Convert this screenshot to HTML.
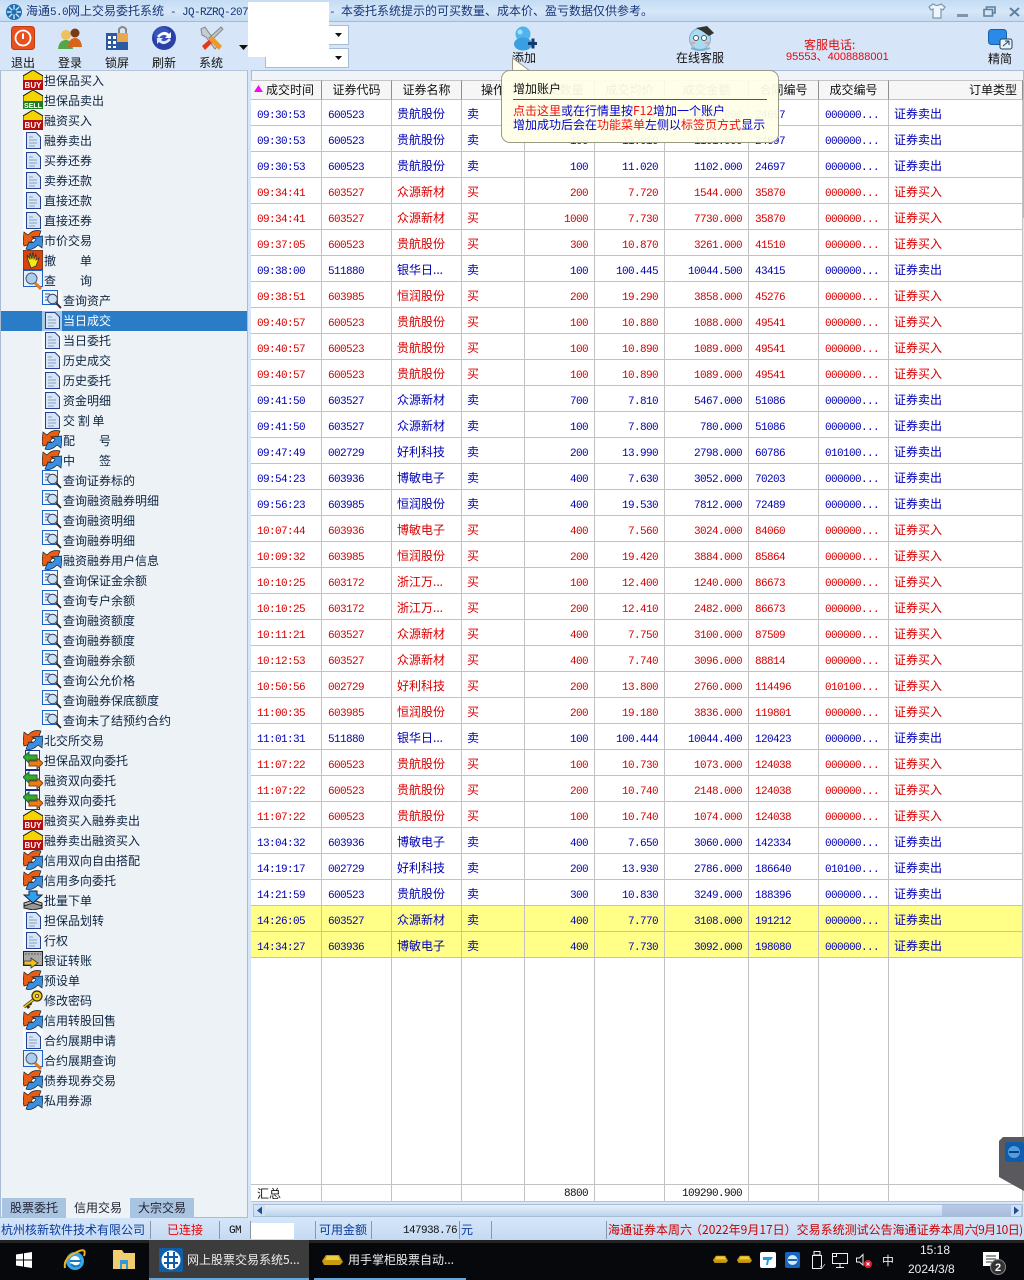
<!DOCTYPE html>
<html lang="zh"><head><meta charset="utf-8"><title>海通5.0网上交易委托系统</title>
<style>
*{box-sizing:border-box}
html,body{margin:0;padding:0}
body{width:1024px;height:1280px;position:relative;overflow:hidden;background:#d6e6f8;font:12px/14px "WenQuanYi Zen Hei","Noto Sans CJK SC",sans-serif;color:#111}
.a{position:absolute;white-space:nowrap}
.m{font-family:"Liberation Mono","WenQuanYi Zen Hei",monospace;font-size:11px;letter-spacing:-.6px}
svg{position:absolute;overflow:visible}
#title{left:0;top:0;width:1024px;height:22px;background:linear-gradient(#c4dcf4,#d6e7f8 55%,#c4dbf3);border-bottom:1px solid #a9b9cc}
#side{left:0;top:70px;width:248px;height:1148px;background:#edf2f7;border:1px solid #a9bcd6;border-top:1px solid #b5c5da}
.t{position:absolute;height:20px;line-height:20px;white-space:nowrap;color:#0d2440}
.t svg{left:0;top:0;width:20px;height:20px}
.t b{font-weight:normal;position:absolute;left:21px;top:1px}
.s{left:42px}.p{left:23px}
#sel{left:1px;top:311px;width:246px;height:20px;background:#2b7cc6}
table{border-collapse:separate;border-spacing:0;table-layout:fixed;position:absolute;left:251px;top:80px;width:772px;background:#fff}
td,th{padding:3px 6px 0 5px;border-right:1px solid #c2c2c2;border-bottom:1px solid #c2c2c2;overflow:hidden;white-space:nowrap;font-weight:normal;height:26px;line-height:14px;text-align:left}
th{height:20px;padding:0 6px;background:#f6f6f6;border-right:1px solid #8e8e8e;border-bottom:1px solid #c2c2c2;border-top:1px solid #c4c4c4;text-align:center;color:#111}
td:nth-child(1),td:nth-child(2),td:nth-child(5),td:nth-child(6),td:nth-child(7),td:nth-child(8),td:nth-child(9){font:11px/14px "Liberation Mono",monospace;letter-spacing:-.6px;padding-left:6px;padding-top:6px}
td:nth-child(5),td:nth-child(6),td:nth-child(7){text-align:right}
tr.b td{color:#0000b4}tr.r td{color:#d80000}tr.y td{background:#ffff88}
tr.sum td,tr.sum td:nth-child(n){height:17px;padding-top:3px;line-height:13px;color:#111}
#tip{left:501px;top:70px;width:278px;height:73px;background:rgba(255,255,232,.94);border:1px solid #9a9a88;border-radius:9px}
#status{left:0;top:1218px;width:1024px;height:22px;background:linear-gradient(#d5e6f9,#c4daf3)}
.sep{position:absolute;top:1221px;width:1px;height:18px;background:#8a98aa}
#task{left:0;top:1240px;width:1024px;height:40px;background:#07080c}
.tab{position:absolute;top:1198px;height:20px;line-height:19px;text-align:center;width:64px;background:#a9c4e0;color:#223}
</style></head><body>
<svg width="0" height="0" style="position:absolute">
<defs>
<symbol id="buy" viewBox="0 0 20 20"><path d="M10 0 L20 6 V12 H0 V6Z" fill="#f5d400" stroke="#111"/><rect x="0" y="10" width="20" height="10" fill="#b50e0e"/><text x="10" y="18" font-family="Liberation Sans" font-weight="bold" font-size="8" fill="#fff" text-anchor="middle">BUY</text></symbol>
<symbol id="sell" viewBox="0 0 20 20"><path d="M10 0 L20 6 V12 H0 V6Z" fill="#f5d400" stroke="#111"/><rect x="0" y="11" width="20" height="8" fill="#1f7a1f"/><text x="10" y="18" font-family="Liberation Sans" font-weight="bold" font-size="7" fill="#fff" text-anchor="middle">SELL</text></symbol>
<symbol id="doc" viewBox="0 0 20 20"><rect x="0" y="0" width="20" height="20" fill="#fff" opacity=".6"/><path d="M3.500 2.500H13L17.500 7V18.500H3.500Z" fill="#d6e6f8" stroke="#243f8f"/><path d="M6 7h4M6 10h8M6 13h8M6 16h6" stroke="#8aa0b8"/></symbol>
<symbol id="swirl" viewBox="0 0 20 20"><rect width="20" height="20" fill="#fff" opacity=".5"/><path d="M0 12L1 2L5 5Q10 -1 18 1L15 9Q10 7 8 11L11 13L1 16Z" fill="#ea5c12" stroke="#222" stroke-width=".7"/><path d="M20 6L19 18L15 15Q9 21 3 19L6 12Q11 14 13 9L9 7Z" fill="#3b8fe0" stroke="#123" stroke-width=".7"/></symbol>
<symbol id="hand" viewBox="0 0 20 20"><rect width="20" height="20" fill="#d8440c" stroke="#333"/><path d="M5 10L4 5L7 9L7 3L9 9L10 2L11 9L13 4L13 10L16 8L13 16L8 18Z" fill="#f4ea10" stroke="#333" stroke-width=".8"/></symbol>
<symbol id="search" viewBox="0 0 20 20"><rect x=".5" y=".5" width="19" height="16" fill="#e6eef8" stroke="#1c60c8"/><circle cx="8.500" cy="8.500" r="5.500" fill="#a8d0ee" stroke="#557"/><path d="M12 13L18 19" stroke="#ea7810" stroke-width="3"/></symbol>
<symbol id="q" viewBox="0 0 20 20"><rect width="20" height="20" fill="#fff" opacity=".7"/><rect x=".5" y=".5" width="15" height="14" fill="#eef5fc" stroke="#1c60c8"/><path d="M3 4h5M3 7h4M3 10h4" stroke="#1c60c8"/><circle cx="10.500" cy="9" r="4.800" fill="#c8e2f4" stroke="#445"/><path d="M14 13L19 18" stroke="#333" stroke-width="2"/></symbol>
<symbol id="arrows" viewBox="0 0 20 20"><path d="M2.500 .500H16.500V19.500H2.500Z" fill="#fff" stroke="#1c2f8f"/><path d="M0 7L6 2V5H14V10H6V13Z" fill="#36a82c" stroke="#164"/><path d="M20 13L14 8V11H6V16H14V19Z" fill="#ea7c14" stroke="#742"/></symbol>
<symbol id="batch" viewBox="0 0 20 20"><path d="M1 13L10 10L19 13V15L10 19L1 15Z" fill="#bbb" stroke="#222"/><path d="M1 16L10 13L19 16V18L10 20L1 18Z" fill="#999" stroke="#222"/><path d="M6 1H14V5H19L10 13L1 5H6Z" fill="#2fa0ee" stroke="#124"/></symbol>
<symbol id="card" viewBox="0 0 20 20"><rect x=".5" y="1.500" width="19" height="14" fill="#aaa" stroke="#222"/><path d="M2 4h16" stroke="#555" stroke-dasharray="2 1"/><path d="M1 11H8V8L15 13L8 18V15H1Z" fill="#f0c01a" stroke="#333" stroke-width=".8"/></symbol>
<symbol id="key" viewBox="0 0 20 20"><circle cx="14" cy="6" r="5" fill="#f2c81a" stroke="#3a2c00" stroke-width="1.200"/><circle cx="14" cy="6" r="1.500" fill="#edf2f7" stroke="#3a2c00" stroke-width=".8"/><path d="M10 10L1 17M3 14L6 18M6 12L8 15" stroke="#3a2c00" stroke-width="3"/><path d="M10 10L1 17" stroke="#f2c81a" stroke-width="1.500"/></symbol>
</defs></svg>

<div class="a" id="title"></div>
<svg style="left:5px;top:3px" width="18" height="18" viewBox="0 0 18 18"><circle cx="9" cy="9" r="8" fill="#1d6fb4"/><path d="M9 2V16M2 9H16M4 4L14 14M14 4L4 14" stroke="#cfe4f6" stroke-width="1.400"/><circle cx="9" cy="9" r="2.500" fill="#1d6fb4"/></svg>
<div class="a" style="left:26px;top:4px;color:#16347a;font-size:12px">海通<span class="m">5.0</span>网上交易委托系统<span class="m"> - JQ-RZRQ-207</span></div>
<div class="a" style="left:329px;top:4px;color:#16347a"><span class="m">- </span>本委托系统提示的可买数量、成本价、盈亏数据仅供参考。</div>
<svg style="left:928px;top:3px" width="18" height="16" viewBox="0 0 18 16"><path d="M5 1L1 4L3 7L5 6V15H13V6L15 7L17 4L13 1Q9 4 5 1Z" fill="#eef5fb" stroke="#7d97ad" stroke-width="1.200"/></svg>
<div class="a" style="left:957px;top:14px;width:11px;height:3px;background:#7d97ad"></div>
<svg style="left:983px;top:6px" width="13" height="11" viewBox="0 0 13 11"><path d="M3.500 3V1H12V7H9.500M1 3.500H9.500V10H1Z" fill="none" stroke="#5f7f9c" stroke-width="1.600"/></svg>
<svg style="left:1009px;top:7px" width="11" height="10" viewBox="0 0 11 10"><path d="M1 1L10 9M10 1L1 9" stroke="#5f7f9c" stroke-width="2"/></svg>

<!-- toolbar -->
<svg style="left:11px;top:26px" width="24" height="24" viewBox="0 0 24 24"><rect x=".5" y=".5" width="23" height="23" rx="3" fill="#e8501e" stroke="#c43a10"/><circle cx="12" cy="12" r="7.500" fill="none" stroke="#fff" stroke-width="1.800"/><path d="M12 7.500V13" stroke="#fff" stroke-width="2"/></svg>
<svg style="left:58px;top:27px" width="24" height="24" viewBox="0 0 24 24"><circle cx="8" cy="8" r="5" fill="#eec060"/><path d="M0 22Q1 13 8 13Q14 13 15 22Z" fill="#52a848"/><circle cx="17" cy="6" r="4.500" fill="#7a3a18"/><path d="M10 20Q11 11 17 11Q23 11 24 20Z" fill="#d8641c"/></svg>
<svg style="left:105px;top:26px" width="24" height="24" viewBox="0 0 24 24"><rect x="1" y="7" width="22" height="17" fill="#2b5aa0"/><path d="M3 10h3v3H3zM8 10h3v3H8zM3 15h3v3H3zM8 15h3v3H8zM3 20h3v2H3zM8 20h3v2H8z" fill="#fff"/><rect x="12" y="7" width="11" height="9" fill="#eaa648"/><path d="M14 7V3Q17.500 -1 21 3V7" fill="none" stroke="#888" stroke-width="2"/></svg>
<svg style="left:152px;top:26px" width="24" height="24" viewBox="0 0 24 24"><circle cx="12" cy="12" r="12" fill="#2a3fa8"/><circle cx="10" cy="9" r="8" fill="#3f63cc" opacity=".6"/><path d="M5 10Q12 3 17 8L19 6V12H13L15 10Q11 7 7 12Z" fill="#fff"/><path d="M19 14Q12 21 7 16L5 18V12H11L9 14Q13 17 17 12Z" fill="#dfe8ff"/></svg>
<svg style="left:199px;top:26px" width="24" height="24" viewBox="0 0 24 24"><path d="M2 3L6 1L10 7L20 18L16 23L7 11L3 9Z" fill="#c6ccd4" stroke="#888"/><path d="M22 1L24 3L13 14L10 12Z" fill="#c0c6cc" stroke="#888"/><path d="M11 13L3 20L6 24L14 16Z" fill="#e23a1c"/><path d="M13 10L23 20L20 24L10 14Z" fill="#ee9a2a"/></svg>
<svg style="left:239px;top:45px" width="9" height="5"><path d="M0 0H9L4.500 5Z" fill="#111"/></svg>
<div class="a" style="left:11px;top:56px">退出</div><div class="a" style="left:58px;top:56px">登录</div><div class="a" style="left:105px;top:56px">锁屏</div><div class="a" style="left:152px;top:56px">刷新</div><div class="a" style="left:199px;top:56px">系统</div>

<div class="a" style="left:265px;top:25px;width:84px;height:20px;background:#fff;border:1px solid #a9bcd6"></div>
<div class="a" style="left:265px;top:48px;width:84px;height:20px;background:#fff;border:1px solid #a9bcd6"></div>
<svg style="left:334px;top:33px" width="9" height="5"><path d="M1 0H8L4.500 4Z" fill="#111"/></svg>
<svg style="left:334px;top:56px" width="9" height="5"><path d="M1 0H8L4.500 4Z" fill="#111"/></svg>
<div class="a" style="left:248px;top:2px;width:81px;height:55px;background:#fff"></div>

<svg style="left:513px;top:26px" width="24" height="25" viewBox="0 0 24 25"><circle cx="10" cy="8" r="7.500" fill="#4eb4ee"/><ellipse cx="10" cy="18" rx="9" ry="6.500" fill="#3a9ee2"/><circle cx="7" cy="6" r="2.500" fill="#a8e0fa"/><path d="M15 16h3.500v-3.500h3v3.500h2.500v3h-2.500v3.500h-3V19H15Z" fill="#123a70"/></svg>
<div class="a" style="left:512px;top:51px">添加</div>
<svg style="left:687px;top:25px" width="28" height="26" viewBox="0 0 28 26"><circle cx="13" cy="14" r="10.500" fill="#a9dcf2" stroke="#7ab0cc"/><path d="M9 3L20 1L27 8L22 11L15 6Z" fill="#333"/><circle cx="9" cy="13" r="2.500" fill="#fff" stroke="#456"/><circle cx="17" cy="13" r="2.500" fill="#fff" stroke="#456"/><ellipse cx="6" cy="18" rx="2.500" ry="1.500" fill="#f4a0a0"/><ellipse cx="20" cy="18" rx="2.500" ry="1.500" fill="#f4a0a0"/><path d="M4 23Q13 27 23 23" stroke="#7ab0cc" fill="none" stroke-width="2"/></svg>
<div class="a" style="left:676px;top:51px">在线客服</div>
<div class="a" style="left:804px;top:38px;color:#e01010">客服电话<span>:</span></div>
<div class="a" style="left:786px;top:50px;color:#f00010;font-family:'Liberation Sans','WenQuanYi Zen Hei',sans-serif;font-size:11px;letter-spacing:0">95553、4008888001</div>
<svg style="left:988px;top:29px" width="25" height="21" viewBox="0 0 25 21"><rect x=".5" y=".5" width="18" height="15" rx="3" fill="#2a8ae6" stroke="#1a5fa8"/><rect x="12" y="10" width="12" height="10" rx="2" fill="#e8f2fc" stroke="#245"/><path d="M15 17L21 12M21 12H17M21 12V16" stroke="#245" fill="none"/></svg>
<div class="a" style="left:988px;top:52px">精简</div>

<!-- sidebar -->
<div class="a" id="side"></div>
<div class="a" id="sel"></div>
<div class="t p" style="top:70px"><svg><use href="#buy"/></svg><b>担保品买入</b></div>
<div class="t p" style="top:90px"><svg><use href="#sell"/></svg><b>担保品卖出</b></div>
<div class="t p" style="top:110px"><svg><use href="#buy"/></svg><b>融资买入</b></div>
<div class="t p" style="top:130px"><svg><use href="#doc"/></svg><b>融券卖出</b></div>
<div class="t p" style="top:150px"><svg><use href="#doc"/></svg><b>买券还券</b></div>
<div class="t p" style="top:170px"><svg><use href="#doc"/></svg><b>卖券还款</b></div>
<div class="t p" style="top:190px"><svg><use href="#doc"/></svg><b>直接还款</b></div>
<div class="t p" style="top:210px"><svg><use href="#doc"/></svg><b>直接还券</b></div>
<div class="t p" style="top:230px"><svg><use href="#swirl"/></svg><b>市价交易</b></div>
<div class="t p" style="top:250px"><svg><use href="#hand"/></svg><b>撤　　单</b></div>
<div class="t p" style="top:270px"><svg><use href="#search"/></svg><b>查　　询</b></div>
<div class="t s" style="top:290px"><svg><use href="#q"/></svg><b>查询资产</b></div>
<div class="t s" style="top:310px"><svg><use href="#doc"/></svg><b style="color:#fff">当日成交</b></div>
<div class="t s" style="top:330px"><svg><use href="#doc"/></svg><b>当日委托</b></div>
<div class="t s" style="top:350px"><svg><use href="#doc"/></svg><b>历史成交</b></div>
<div class="t s" style="top:370px"><svg><use href="#doc"/></svg><b>历史委托</b></div>
<div class="t s" style="top:390px"><svg><use href="#doc"/></svg><b>资金明细</b></div>
<div class="t s" style="top:410px"><svg><use href="#doc"/></svg><b>交 割 单</b></div>
<div class="t s" style="top:430px"><svg><use href="#swirl"/></svg><b>配　　号</b></div>
<div class="t s" style="top:450px"><svg><use href="#swirl"/></svg><b>中　　签</b></div>
<div class="t s" style="top:470px"><svg><use href="#q"/></svg><b>查询证券标的</b></div>
<div class="t s" style="top:490px"><svg><use href="#q"/></svg><b>查询融资融券明细</b></div>
<div class="t s" style="top:510px"><svg><use href="#q"/></svg><b>查询融资明细</b></div>
<div class="t s" style="top:530px"><svg><use href="#q"/></svg><b>查询融券明细</b></div>
<div class="t s" style="top:550px"><svg><use href="#swirl"/></svg><b>融资融券用户信息</b></div>
<div class="t s" style="top:570px"><svg><use href="#q"/></svg><b>查询保证金余额</b></div>
<div class="t s" style="top:590px"><svg><use href="#q"/></svg><b>查询专户余额</b></div>
<div class="t s" style="top:610px"><svg><use href="#q"/></svg><b>查询融资额度</b></div>
<div class="t s" style="top:630px"><svg><use href="#q"/></svg><b>查询融券额度</b></div>
<div class="t s" style="top:650px"><svg><use href="#q"/></svg><b>查询融券余额</b></div>
<div class="t s" style="top:670px"><svg><use href="#q"/></svg><b>查询公允价格</b></div>
<div class="t s" style="top:690px"><svg><use href="#q"/></svg><b>查询融券保底额度</b></div>
<div class="t s" style="top:710px"><svg><use href="#q"/></svg><b>查询未了结预约合约</b></div>
<div class="t p" style="top:730px"><svg><use href="#swirl"/></svg><b>北交所交易</b></div>
<div class="t p" style="top:750px"><svg><use href="#arrows"/></svg><b>担保品双向委托</b></div>
<div class="t p" style="top:770px"><svg><use href="#arrows"/></svg><b>融资双向委托</b></div>
<div class="t p" style="top:790px"><svg><use href="#arrows"/></svg><b>融券双向委托</b></div>
<div class="t p" style="top:810px"><svg><use href="#buy"/></svg><b>融资买入融券卖出</b></div>
<div class="t p" style="top:830px"><svg><use href="#buy"/></svg><b>融券卖出融资买入</b></div>
<div class="t p" style="top:850px"><svg><use href="#swirl"/></svg><b>信用双向自由搭配</b></div>
<div class="t p" style="top:870px"><svg><use href="#swirl"/></svg><b>信用多向委托</b></div>
<div class="t p" style="top:890px"><svg><use href="#batch"/></svg><b>批量下单</b></div>
<div class="t p" style="top:910px"><svg><use href="#doc"/></svg><b>担保品划转</b></div>
<div class="t p" style="top:930px"><svg><use href="#doc"/></svg><b>行权</b></div>
<div class="t p" style="top:950px"><svg><use href="#card"/></svg><b>银证转账</b></div>
<div class="t p" style="top:970px"><svg><use href="#swirl"/></svg><b>预设单</b></div>
<div class="t p" style="top:990px"><svg><use href="#key"/></svg><b>修改密码</b></div>
<div class="t p" style="top:1010px"><svg><use href="#swirl"/></svg><b>信用转股回售</b></div>
<div class="t p" style="top:1030px"><svg><use href="#doc"/></svg><b>合约展期申请</b></div>
<div class="t p" style="top:1050px"><svg><use href="#search"/></svg><b>合约展期查询</b></div>
<div class="t p" style="top:1070px"><svg><use href="#swirl"/></svg><b>债券现券交易</b></div>
<div class="t p" style="top:1090px"><svg><use href="#swirl"/></svg><b>私用券源</b></div>
<div class="tab" style="left:2px">股票委托</div>
<div class="tab" style="left:66px;background:#edf2f7">信用交易</div>
<div class="tab" style="left:130px">大宗交易</div>

<!-- grid -->
<div class="a" style="left:251px;top:70px;width:773px;height:148px;border:1px solid #a9bcd6;border-bottom:0;background:#f0f4f9"></div>
<table>
<colgroup><col style="width:71px"><col style="width:70px"><col style="width:70px"><col style="width:63px"><col style="width:70px"><col style="width:70px"><col style="width:84px"><col style="width:70px"><col style="width:70px"><col style="width:134px"></colgroup>
<tr><th style="text-align:right;padding-right:7px">成交时间</th><th>证券代码</th><th>证券名称</th><th>操作</th><th>成交数量</th><th>成交均价</th><th>成交金额</th><th>合同编号</th><th>成交编号</th><th style="text-align:right;padding-right:5px">订单类型</th></tr>
<tr class="b"><td>09:30:53</td><td>600523</td><td>贵航股份</td><td>卖</td><td>100</td><td>11.000</td><td>1100.000</td><td>24697</td><td>000000...</td><td>证券卖出</td></tr>
<tr class="b"><td>09:30:53</td><td>600523</td><td>贵航股份</td><td>卖</td><td>100</td><td>11.010</td><td>1101.000</td><td>24697</td><td>000000...</td><td>证券卖出</td></tr>
<tr class="b"><td>09:30:53</td><td>600523</td><td>贵航股份</td><td>卖</td><td>100</td><td>11.020</td><td>1102.000</td><td>24697</td><td>000000...</td><td>证券卖出</td></tr>
<tr class="r"><td>09:34:41</td><td>603527</td><td>众源新材</td><td>买</td><td>200</td><td>7.720</td><td>1544.000</td><td>35870</td><td>000000...</td><td>证券买入</td></tr>
<tr class="r"><td>09:34:41</td><td>603527</td><td>众源新材</td><td>买</td><td>1000</td><td>7.730</td><td>7730.000</td><td>35870</td><td>000000...</td><td>证券买入</td></tr>
<tr class="r"><td>09:37:05</td><td>600523</td><td>贵航股份</td><td>买</td><td>300</td><td>10.870</td><td>3261.000</td><td>41510</td><td>000000...</td><td>证券买入</td></tr>
<tr class="b"><td>09:38:00</td><td>511880</td><td>银华日...</td><td>卖</td><td>100</td><td>100.445</td><td>10044.500</td><td>43415</td><td>000000...</td><td>证券卖出</td></tr>
<tr class="r"><td>09:38:51</td><td>603985</td><td>恒润股份</td><td>买</td><td>200</td><td>19.290</td><td>3858.000</td><td>45276</td><td>000000...</td><td>证券买入</td></tr>
<tr class="r"><td>09:40:57</td><td>600523</td><td>贵航股份</td><td>买</td><td>100</td><td>10.880</td><td>1088.000</td><td>49541</td><td>000000...</td><td>证券买入</td></tr>
<tr class="r"><td>09:40:57</td><td>600523</td><td>贵航股份</td><td>买</td><td>100</td><td>10.890</td><td>1089.000</td><td>49541</td><td>000000...</td><td>证券买入</td></tr>
<tr class="r"><td>09:40:57</td><td>600523</td><td>贵航股份</td><td>买</td><td>100</td><td>10.890</td><td>1089.000</td><td>49541</td><td>000000...</td><td>证券买入</td></tr>
<tr class="b"><td>09:41:50</td><td>603527</td><td>众源新材</td><td>卖</td><td>700</td><td>7.810</td><td>5467.000</td><td>51086</td><td>000000...</td><td>证券卖出</td></tr>
<tr class="b"><td>09:41:50</td><td>603527</td><td>众源新材</td><td>卖</td><td>100</td><td>7.800</td><td>780.000</td><td>51086</td><td>000000...</td><td>证券卖出</td></tr>
<tr class="b"><td>09:47:49</td><td>002729</td><td>好利科技</td><td>卖</td><td>200</td><td>13.990</td><td>2798.000</td><td>60786</td><td>010100...</td><td>证券卖出</td></tr>
<tr class="b"><td>09:54:23</td><td>603936</td><td>博敏电子</td><td>卖</td><td>400</td><td>7.630</td><td>3052.000</td><td>70203</td><td>000000...</td><td>证券卖出</td></tr>
<tr class="b"><td>09:56:23</td><td>603985</td><td>恒润股份</td><td>卖</td><td>400</td><td>19.530</td><td>7812.000</td><td>72489</td><td>000000...</td><td>证券卖出</td></tr>
<tr class="r"><td>10:07:44</td><td>603936</td><td>博敏电子</td><td>买</td><td>400</td><td>7.560</td><td>3024.000</td><td>84060</td><td>000000...</td><td>证券买入</td></tr>
<tr class="r"><td>10:09:32</td><td>603985</td><td>恒润股份</td><td>买</td><td>200</td><td>19.420</td><td>3884.000</td><td>85864</td><td>000000...</td><td>证券买入</td></tr>
<tr class="r"><td>10:10:25</td><td>603172</td><td>浙江万...</td><td>买</td><td>100</td><td>12.400</td><td>1240.000</td><td>86673</td><td>000000...</td><td>证券买入</td></tr>
<tr class="r"><td>10:10:25</td><td>603172</td><td>浙江万...</td><td>买</td><td>200</td><td>12.410</td><td>2482.000</td><td>86673</td><td>000000...</td><td>证券买入</td></tr>
<tr class="r"><td>10:11:21</td><td>603527</td><td>众源新材</td><td>买</td><td>400</td><td>7.750</td><td>3100.000</td><td>87509</td><td>000000...</td><td>证券买入</td></tr>
<tr class="r"><td>10:12:53</td><td>603527</td><td>众源新材</td><td>买</td><td>400</td><td>7.740</td><td>3096.000</td><td>88814</td><td>000000...</td><td>证券买入</td></tr>
<tr class="r"><td>10:50:56</td><td>002729</td><td>好利科技</td><td>买</td><td>200</td><td>13.800</td><td>2760.000</td><td>114496</td><td>010100...</td><td>证券买入</td></tr>
<tr class="r"><td>11:00:35</td><td>603985</td><td>恒润股份</td><td>买</td><td>200</td><td>19.180</td><td>3836.000</td><td>119801</td><td>000000...</td><td>证券买入</td></tr>
<tr class="b"><td>11:01:31</td><td>511880</td><td>银华日...</td><td>卖</td><td>100</td><td>100.444</td><td>10044.400</td><td>120423</td><td>000000...</td><td>证券卖出</td></tr>
<tr class="r"><td>11:07:22</td><td>600523</td><td>贵航股份</td><td>买</td><td>100</td><td>10.730</td><td>1073.000</td><td>124038</td><td>000000...</td><td>证券买入</td></tr>
<tr class="r"><td>11:07:22</td><td>600523</td><td>贵航股份</td><td>买</td><td>200</td><td>10.740</td><td>2148.000</td><td>124038</td><td>000000...</td><td>证券买入</td></tr>
<tr class="r"><td>11:07:22</td><td>600523</td><td>贵航股份</td><td>买</td><td>100</td><td>10.740</td><td>1074.000</td><td>124038</td><td>000000...</td><td>证券买入</td></tr>
<tr class="b"><td>13:04:32</td><td>603936</td><td>博敏电子</td><td>卖</td><td>400</td><td>7.650</td><td>3060.000</td><td>142334</td><td>000000...</td><td>证券卖出</td></tr>
<tr class="b"><td>14:19:17</td><td>002729</td><td>好利科技</td><td>卖</td><td>200</td><td>13.930</td><td>2786.000</td><td>186640</td><td>010100...</td><td>证券卖出</td></tr>
<tr class="b"><td>14:21:59</td><td>600523</td><td>贵航股份</td><td>卖</td><td>300</td><td>10.830</td><td>3249.000</td><td>188396</td><td>000000...</td><td>证券卖出</td></tr>
<tr class="b y"><td>14:26:05</td><td>603527</td><td>众源新材</td><td>卖</td><td>400</td><td>7.770</td><td>3108.000</td><td>191212</td><td>000000...</td><td>证券卖出</td></tr>
<tr class="b y"><td>14:34:27</td><td>603936</td><td>博敏电子</td><td>卖</td><td>400</td><td>7.730</td><td>3092.000</td><td>198080</td><td>000000...</td><td>证券卖出</td></tr>
<tr><td style="height:227px"></td><td></td><td></td><td></td><td></td><td></td><td></td><td></td><td></td><td></td></tr>
<tr class="sum"><td style="font:12px/13px 'WenQuanYi Zen Hei',sans-serif;letter-spacing:0">汇总</td><td></td><td></td><td></td><td>8800</td><td></td><td>109290.900</td><td></td><td></td><td></td></tr>
</table>
<svg style="left:254px;top:85px" width="9" height="7"><path d="M0 7L4.500 0L9 7Z" fill="#ee10ee"/></svg>
<!-- scrollbar -->
<div class="a" style="left:253px;top:1204px;width:770px;height:13px;border:1px solid #a9bcd6;background:linear-gradient(#e6f0fb,#bcd3ee)"></div>
<div class="a" style="left:942px;top:1205px;width:80px;height:11px;background:linear-gradient(#b8cbe6,#a8bddc)"></div>
<svg style="left:255px;top:1205px" width="10" height="11"><rect width="10" height="11" fill="#cfe0f4"/><path d="M7 1.500L2 5.500L7 9.500Z" fill="#1c4f96"/></svg>
<svg style="left:1011px;top:1205px" width="10" height="11"><rect width="10" height="11" fill="#cfe0f4"/><path d="M3 1.500L8 5.500L3 9.500Z" fill="#1c4f96"/></svg>
<!-- tv tab -->
<svg style="left:999px;top:1137px" width="25" height="54" viewBox="0 0 25 54"><path d="M25 0H4L0 4V40L25 54Z" fill="#5a5a5e"/><rect x="6" y="5" width="19" height="20" rx="3" fill="#0e5cab"/><circle cx="15" cy="15" r="6" fill="#4f9fe0"/><path d="M10 15H20" stroke="#0e3f80" stroke-width="2"/></svg>

<!-- tooltip -->
<svg style="left:512px;top:58px" width="18" height="14"><path d="M0.500 0V13H18Z" fill="#fffff0" stroke="#9a9a88"/></svg>
<div class="a" id="tip"></div>
<div class="a" style="left:513px;top:71px;width:16px;height:2px;background:#fffff0"></div>
<div class="a" style="left:513px;top:82px;color:#111">增加账户</div>
<div class="a" style="left:513px;top:99px;width:254px;height:1px;background:#2a7a10"></div>
<div class="a" style="left:513px;top:104px;color:#0000d0"><span style="color:#f01010">点击这里</span>或在行情里按<span style="color:#f01010">F12</span>增加一个账户</div>
<div class="a" style="left:513px;top:118px;color:#0000d0">增加成功后会在<span style="color:#f01010">功能菜单</span>左侧以<span style="color:#f01010">标签页方式</span>显示</div>

<!-- status -->
<div class="a" id="status"></div>
<div class="sep" style="left:150px"></div><div class="sep" style="left:219px"></div><div class="sep" style="left:250px"></div><div class="sep" style="left:315px"></div><div class="sep" style="left:371px"></div><div class="sep" style="left:459px"></div><div class="sep" style="left:491px"></div><div class="sep" style="left:606px"></div>
<div class="a" style="left:1px;top:1223px;color:#0a3a9a">杭州核新软件技术有限公司</div>
<div class="a" style="left:167px;top:1223px;color:#f00000">已连接</div>
<div class="a m" style="left:229px;top:1224px;color:#111">GM</div>
<div class="a" style="left:251px;top:1223px;width:43px;height:16px;background:#fff"></div>
<div class="a" style="left:319px;top:1223px;color:#0a3a9a">可用金额</div>
<div class="a m" style="left:403px;top:1224px;color:#111">147938.76</div>
<div class="a" style="left:461px;top:1223px;color:#0a3a9a">元</div>
<div class="a" style="left:608px;top:1223px;width:416px;overflow:hidden;color:#c80000">海通证券本周六<span style="margin-left:-2px">（</span>2022年9月17日）交易系统测试公告海通证券本周六<span style="margin-left:-2px;letter-spacing:-.6px">(9月10日)</span></div>

<!-- taskbar -->
<div class="a" id="task"></div>
<div class="a" style="left:0;top:1240px;width:1024px;height:3px;background:#222"></div>
<div class="a" style="left:149px;top:1240px;width:160px;height:38px;background:#3c3c3c"></div>
<div class="a" style="left:149px;top:1278px;width:160px;height:2px;background:#66a6d8"></div>
<div class="a" style="left:314px;top:1278px;width:152px;height:2px;background:#66a6d8"></div>
<svg style="left:16px;top:1252px" width="16" height="16" viewBox="0 0 16 16"><path d="M0 2.500L7 1.500V7.500H0ZM8 1.300L16 0V7.500H8ZM0 8.500H7V14.500L0 13.500ZM8 8.500H16V16L8 14.700Z" fill="#fff"/></svg>
<svg style="left:63px;top:1248px" width="24" height="24" viewBox="0 0 24 24"><circle cx="12" cy="13" r="9" fill="#36a8e8"/><circle cx="12" cy="13" r="5" fill="#fff"/><path d="M7 13H18M17 17Q12 20 8 16" stroke="#1a78c0" stroke-width="2" fill="none"/><path d="M2 20Q0 10 14 4Q24 -1 21 8" stroke="#f0b020" stroke-width="2" fill="none"/></svg>
<svg style="left:113px;top:1250px" width="22" height="19" viewBox="0 0 22 19"><path d="M0 0H9L11 3H22V19H0Z" fill="#f2cc70"/><rect x="7" y="10" width="8" height="9" fill="#2f98d8"/><rect x="9" y="14" width="4" height="5" fill="#f2cc70"/></svg>
<svg style="left:159px;top:1248px" width="24" height="24" viewBox="0 0 24 24"><rect width="24" height="24" rx="2" fill="#0f5eaa"/><circle cx="12" cy="12" r="9.500" fill="#fff"/><path d="M5 9H19M5 15H19M9 4V20M15 4V20" stroke="#0f5eaa" stroke-width="2"/></svg>
<div class="a" style="left:187px;top:1253px;color:#eee">网上股票交易系统5...</div>
<svg style="left:322px;top:1254px" width="21" height="11" viewBox="0 0 21 11"><path d="M4 1H17L21 8L18 11H2L0 7Z" fill="#c89a10"/><path d="M5 2H16L18 6H3Z" fill="#f0cc40"/></svg>
<div class="a" style="left:348px;top:1253px;color:#eee">用手掌柜股票自动...</div>
<svg style="left:713px;top:1255px" width="15" height="8" viewBox="0 0 21 11"><path d="M4 1H17L21 8L18 11H2L0 7Z" fill="#c89a10"/><path d="M5 2H16L18 6H3Z" fill="#f0cc40"/></svg>
<svg style="left:737px;top:1255px" width="15" height="8" viewBox="0 0 21 11"><path d="M4 1H17L21 8L18 11H2L0 7Z" fill="#c89a10"/><path d="M5 2H16L18 6H3Z" fill="#f0cc40"/></svg>
<svg style="left:760px;top:1252px" width="16" height="16" viewBox="0 0 16 16"><rect width="16" height="16" rx="2" fill="#fff"/><path d="M3 5H13L11 8H9L8 13H6L7 8H3Z" fill="#1aa0e0"/></svg>
<svg style="left:785px;top:1252px" width="15" height="16" viewBox="0 0 15 16"><rect width="15" height="16" rx="2" fill="#1565c0"/><circle cx="7.500" cy="8" r="5" fill="#d6eafa"/><path d="M3 8H12" stroke="#1565c0" stroke-width="2"/></svg>
<svg style="left:811px;top:1251px" width="14" height="18" viewBox="0 0 14 18"><path d="M3 .5H9V4H3ZM1.500 4.500H10.500V17.500H1.500Z" fill="none" stroke="#eee"/><path d="M9 15L11 17L14 13" stroke="#aaa" fill="none"/></svg>
<svg style="left:832px;top:1253px" width="16" height="15" viewBox="0 0 16 15"><path d="M4 .5H15.500V10.500H.5V3" fill="none" stroke="#eee"/><rect x=".5" y=".5" width="4" height="3" fill="#07080c" stroke="#eee"/><path d="M8 11V14M4 14.500H12" stroke="#eee"/></svg>
<svg style="left:856px;top:1253px" width="17" height="16" viewBox="0 0 17 16"><path d="M.5 5H3.500L7 1.500V12L3.500 9H.5Z" fill="none" stroke="#eee"/><circle cx="12" cy="11" r="4" fill="#e01c2c"/><path d="M10.500 9.500L13.500 12.500M13.500 9.500L10.500 12.500" stroke="#fff"/></svg>
<div class="a" style="left:882px;top:1254px;color:#eee">中</div>
<div class="a" style="left:920px;top:1243px;color:#eee;font:12px/14px 'Liberation Sans',sans-serif">15:18</div>
<div class="a" style="left:908px;top:1262px;color:#eee;font:12px/14px 'Liberation Sans',sans-serif">2024/3/8</div>
<svg style="left:983px;top:1252px" width="24" height="24" viewBox="0 0 24 24"><path d="M0 0H16V14H0Z" fill="#fff"/><path d="M3 4H13M3 7H13M3 10H10" stroke="#333"/><circle cx="15" cy="15" r="7.500" fill="#333" stroke="#888"/><text x="15" y="19" font-family="Liberation Sans" font-weight="bold" font-size="11" fill="#fff" text-anchor="middle">2</text></svg>
</body></html>
